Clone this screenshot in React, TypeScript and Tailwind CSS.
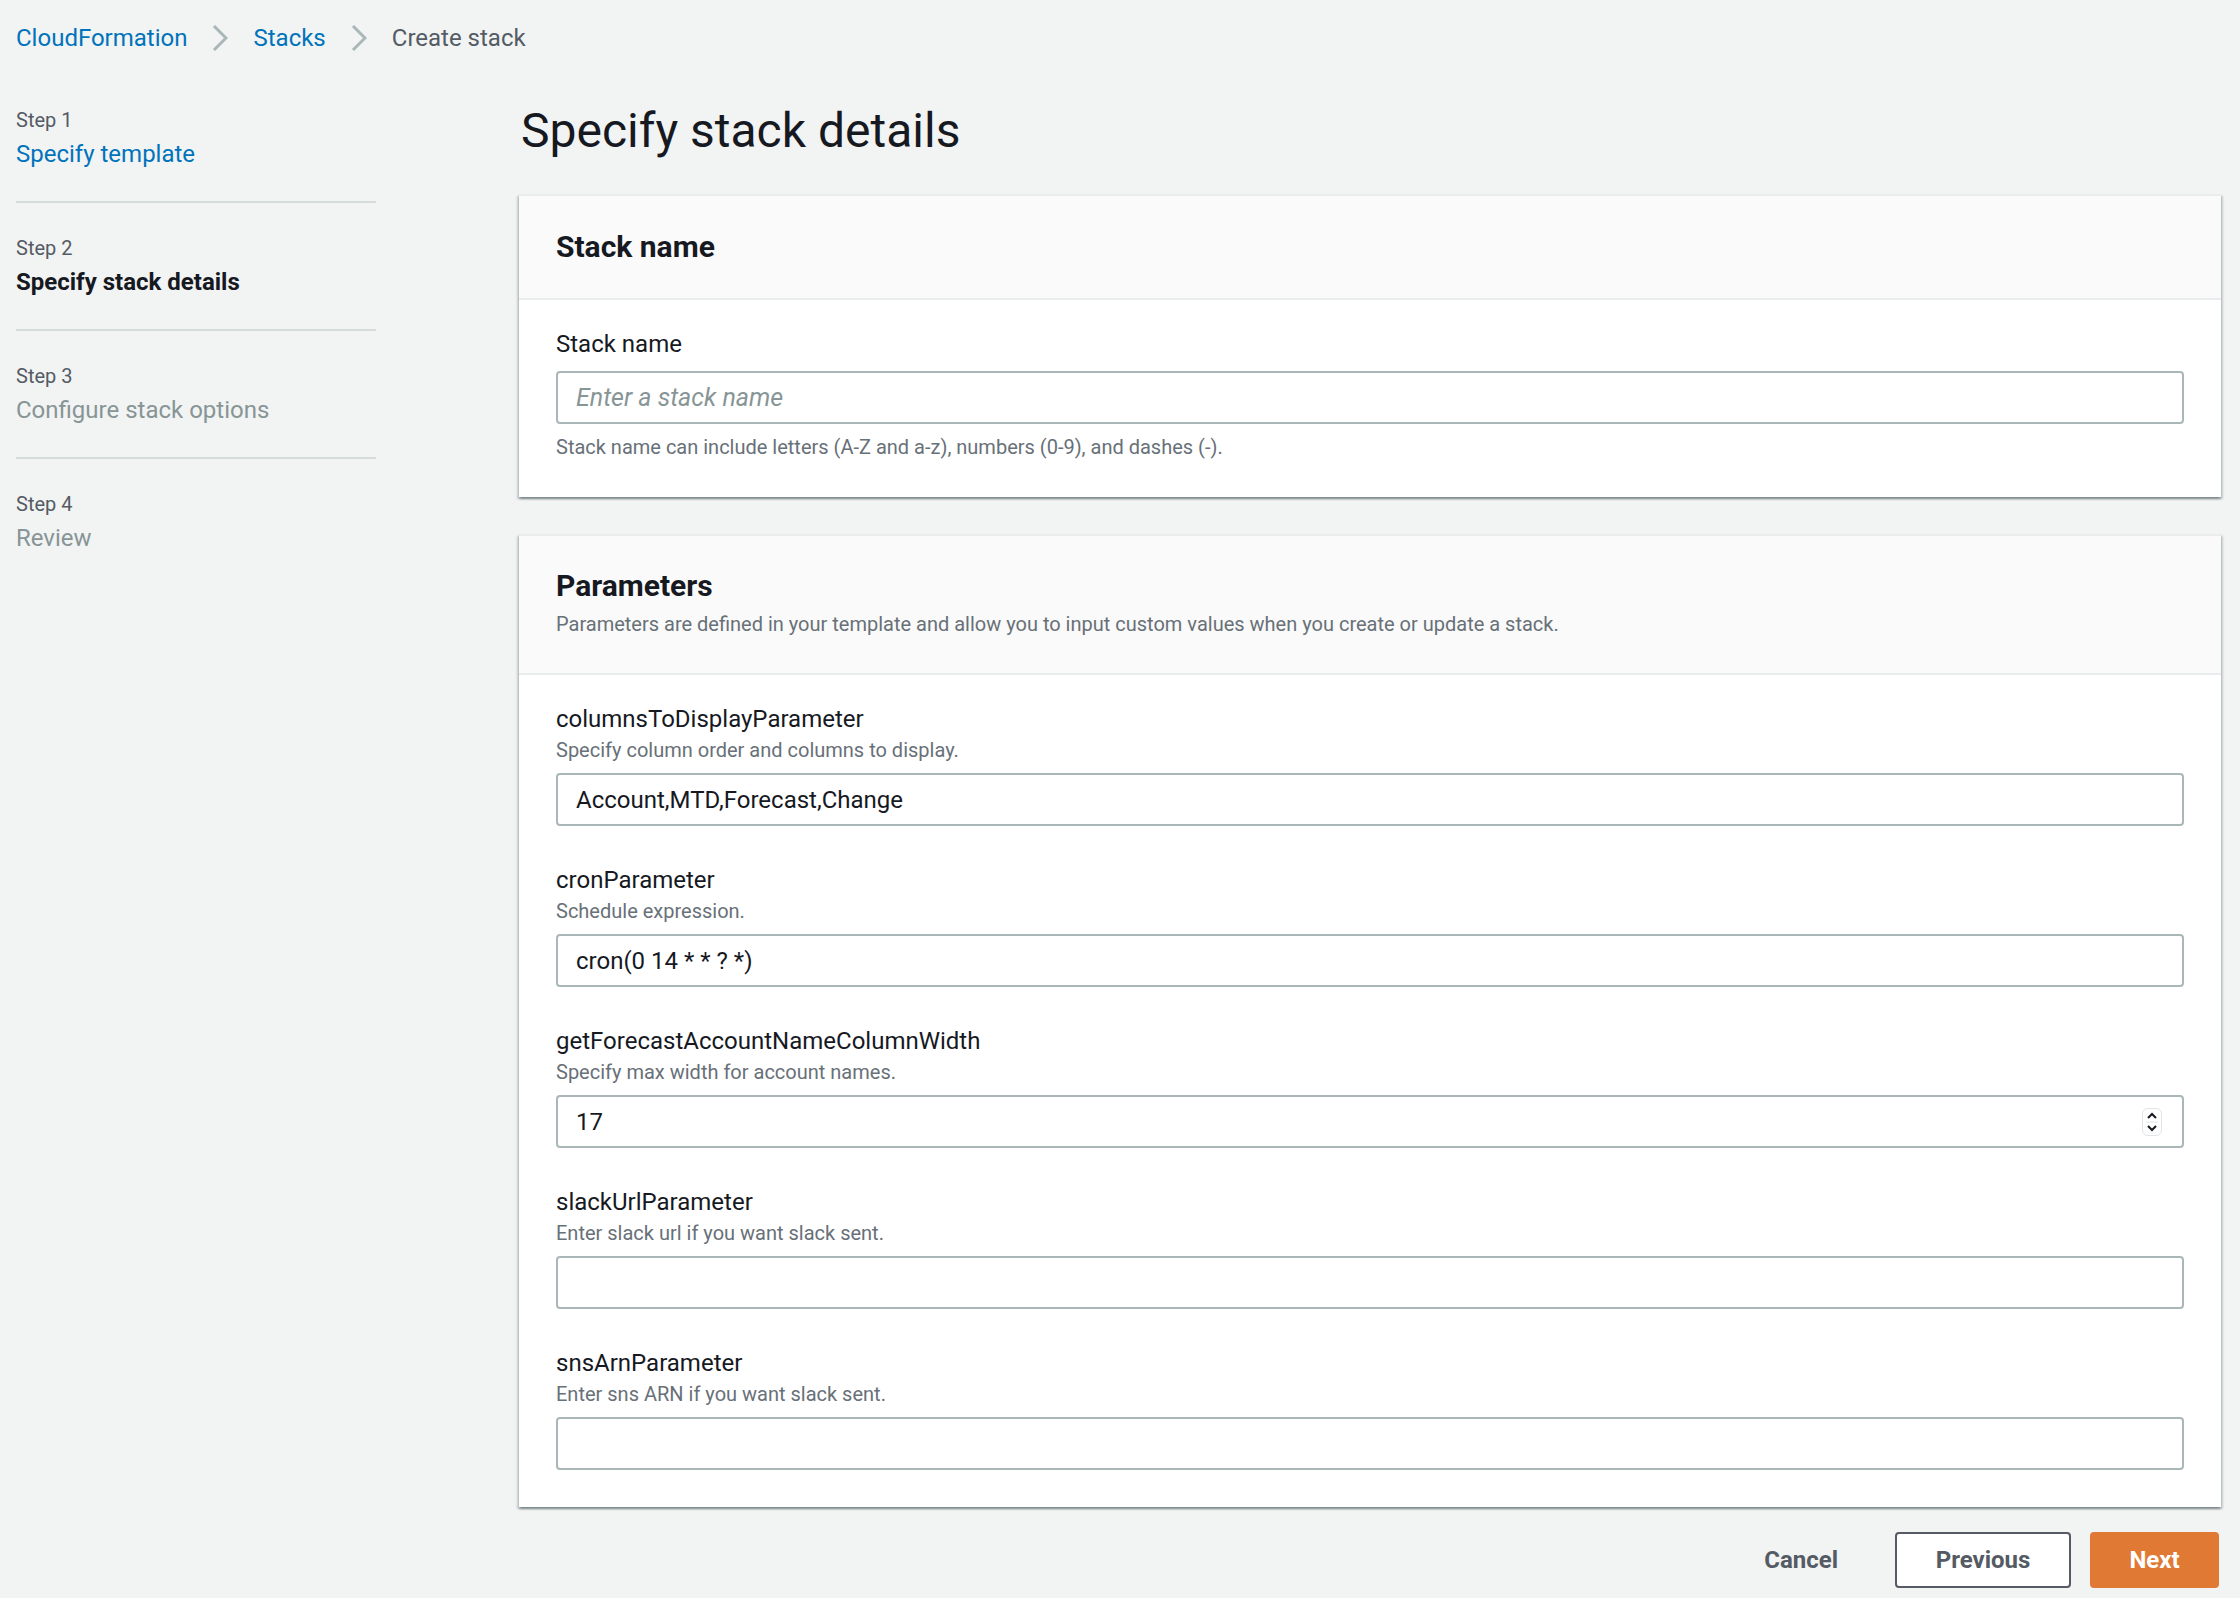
import { useState } from "react";

// Create stack wizard, step 2 (CloudFormation console look)

const steps = [
  { step: "Step 1", title: "Specify template", state: "done" },
  { step: "Step 2", title: "Specify stack details", state: "active" },
  { step: "Step 3", title: "Configure stack options", state: "todo" },
  { step: "Step 4", title: "Review", state: "todo" },
];

const params = [
  { name: "columnsToDisplayParameter", desc: "Specify column order and columns to display.", value: "Account,MTD,Forecast,Change", type: "text" },
  { name: "cronParameter", desc: "Schedule expression.", value: "cron(0 14 * * ? *)", type: "text" },
  { name: "getForecastAccountNameColumnWidth", desc: "Specify max width for account names.", value: "17", type: "number" },
  { name: "slackUrlParameter", desc: "Enter slack url if you want slack sent.", value: "", type: "text" },
  { name: "snsArnParameter", desc: "Enter sns ARN if you want slack sent.", value: "", type: "text" },
];

const Chevron = () => (
  <svg width="16" height="28" viewBox="0 0 16 28" fill="none" className="mx-[25px]">
    <path d="M2 2L14 14L2 26" stroke="#aab7b8" strokeWidth="3" />
  </svg>
);

const Spinner = () => (
  <div className="absolute right-[22px] top-1/2 -translate-y-1/2 w-[20px] h-[28px] rounded-[6px] border border-[#e1e4e4] bg-white flex flex-col items-center justify-center">
    <svg width="12" height="24" viewBox="0 0 12 24" fill="none">
      <path d="M2 8L6 4L10 8" stroke="#16191f" strokeWidth="2" />
      <path d="M0 12H12" stroke="#e1e4e4" strokeWidth="1" />
      <path d="M2 16L6 20L10 16" stroke="#16191f" strokeWidth="2" />
    </svg>
  </div>
);

const TextInput = ({ value, placeholder, number }: { value?: string; placeholder?: string; number?: boolean }) => {
  const [val, setVal] = useState(value ?? "");
  return (
    <div className="relative">
      <input
        value={val}
        onChange={(e) => setVal(e.target.value)}
        placeholder={placeholder}
        className="w-full h-[53px] border-2 border-[#aab7b8] rounded-[4px] bg-white px-[18px] text-[24px] text-[#16191f] outline-none placeholder:italic placeholder:text-[#879596] placeholder:text-[25px]"
      />
      {number && <Spinner />}
    </div>
  );
};

const cardShadow =
  "bg-white border-t-2 border-[#eaeded] shadow-[0_2px_2px_0_rgba(0,28,36,0.3),2px_2px_2px_0_rgba(0,28,36,0.15),-2px_2px_2px_0_rgba(0,28,36,0.15)]";

export default function App() {
  return (
    <div className="min-h-screen bg-[#f2f3f3] pt-[2px] font-['Roboto','Liberation_Sans',sans-serif] text-[#16191f]">
      {/* Breadcrumbs */}
      <div className="h-[72px] flex items-center px-4 text-[24px]">
        <span className="text-[#0073bb]">CloudFormation</span>
        <Chevron />
        <span className="text-[#0073bb]">Stacks</span>
        <Chevron />
        <span className="text-[#545b64]">Create stack</span>
      </div>

      <div className="flex pl-4">
        {/* Wizard steps */}
        <div className="w-[360px] shrink-0 pt-[32px]">
          {steps.map((s, i) => (
            <div
              key={s.step}
              className={`${i > 0 ? "pt-[31px]" : ""} ${i < steps.length - 1 ? "pb-[31px] border-b-2 border-[#d5dbdb]" : ""}`}
            >
              <div className="text-[20px] leading-[28px] text-[#545b64]">{s.step}</div>
              <div
                className={`mt-1 text-[24px] leading-[32px] ${
                  s.state === "done" ? "text-[#0073bb]" : s.state === "active" ? "font-bold text-[#16191f]" : "text-[#879596]"
                }`}
              >
                {s.title}
              </div>
            </div>
          ))}
        </div>

        {/* Main form */}
        <div className="flex-1 ml-[143px] pr-[19px] pt-[27px] pb-[8px]">
          <h1 className="text-[48px] leading-[60px] font-normal pl-[2px] mb-[33px]">Specify stack details</h1>

          <div className={cardShadow}>
            <div className="bg-[#fafafa] px-[37px] py-[31px] border-b-2 border-[#eaeded]">
              <h2 className="text-[30px] leading-[40px] font-bold">Stack name</h2>
            </div>
            <div className="px-[37px] pt-[28px] pb-[35px]">
              <div className="text-[24px] leading-[32px]">Stack name</div>
              <div className="mt-[11px]">
                <TextInput placeholder="Enter a stack name" />
              </div>
              <div className="mt-[8px] text-[20px] leading-[30px] text-[#687078]">
                Stack name can include letters (A-Z and a-z), numbers (0-9), and dashes (-).
              </div>
            </div>
          </div>

          <div className={`${cardShadow} mt-[37px]`}>
            <div className="bg-[#fafafa] px-[37px] pt-[30px] pb-[34px] border-b-2 border-[#eaeded]">
              <h2 className="text-[30px] leading-[40px] font-bold">Parameters</h2>
              <p className="mt-[3px] text-[20px] leading-[30px] text-[#687078]">
                Parameters are defined in your template and allow you to input custom values when you create or update a stack.
              </p>
            </div>
            <div className="px-[37px] pt-[28px] pb-[37px] flex flex-col gap-[38px]">
              {params.map((p) => (
                <div key={p.name}>
                  <div className="text-[24px] leading-[32px]">{p.name}</div>
                  <div className="text-[20px] leading-[30px] text-[#687078]">{p.desc}</div>
                  <div className="mt-[8px]">
                    <TextInput value={p.value} number={p.type === "number"} />
                  </div>
                </div>
              ))}
            </div>
          </div>

          {/* Footer actions */}
          <div className="flex justify-end items-center gap-[19px] mt-[25px] pr-[2px]">
            <button className="h-[56px] px-[38px] text-[24px] font-bold text-[#545b64]">Cancel</button>
            <button className="h-[56px] w-[176px] rounded-[4px] border-2 border-[#545b64] bg-white text-[24px] font-bold text-[#545b64]">
              Previous
            </button>
            <button className="h-[56px] w-[129px] rounded-[4px] bg-[#e07933] text-[24px] font-bold text-white">Next</button>
          </div>
        </div>
      </div>
    </div>
  );
}
